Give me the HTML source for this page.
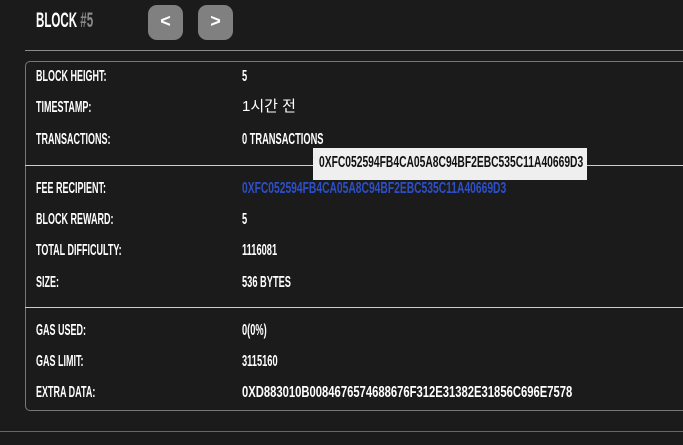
<!DOCTYPE html>
<html><head><meta charset="utf-8"><style>
body{margin:0;width:683px;height:445px;background:#1b1b1b;overflow:hidden;position:relative;font-family:"Liberation Sans","Noto Sans CJK KR",sans-serif;font-weight:bold;color:#fff}
.t{position:absolute;white-space:nowrap;font-size:16px;line-height:16px;transform:scaleX(0.5625);transform-origin:left center}
.l{left:36px}.v{left:242px;transform:scaleX(0.58)}
.line{position:absolute;height:1px;background:#8a8a8a}
.btn{position:absolute;top:5px;width:35px;height:35px;border-radius:9px;background:#808080;color:#fff;font-size:18px;text-align:center;line-height:33px}
</style></head><body>
<div class="t" style="left:36px;top:10px;font-size:21px;line-height:21px;transform:scaleX(0.55)">BLOCK <span style="color:#8a8a8a">#5</span></div>
<div class="btn" style="left:148px">&lt;</div>
<div class="btn" style="left:198px">&gt;</div>
<div class="line" style="left:25px;right:0;top:50px"></div>
<div style="position:absolute;left:25px;top:61px;width:700px;height:348px;border:1px solid #777;border-radius:5px"></div>
<div class="line" style="left:25px;right:0;top:165px;background:#ccc"></div>
<div class="line" style="left:25px;right:0;top:307px;background:#ccc"></div>
<div class="line" style="left:0;right:0;top:431px;background:#666"></div>

<div class="t l" style="top:69px">BLOCK HEIGHT:</div><div class="t v" style="top:69px">5</div>
<div class="t l" style="top:100px">TIMESTAMP:</div><div class="t v" style="top:99px;transform:none;font-weight:normal;font-size:15px">1시간 전</div>
<div class="t l" style="top:132px">TRANSACTIONS:</div><div class="t v" style="top:132px">0 TRANSACTIONS</div>
<div class="t l" style="top:181px">FEE RECIPIENT:</div><div class="t v" style="top:181px;color:#2d50c8;transform:scaleX(0.643)">0XFC052594FB4CA05A8C94BF2EBC535C11A40669D3</div>
<div class="t l" style="top:212px">BLOCK REWARD:</div><div class="t v" style="top:212px">5</div>
<div class="t l" style="top:243px">TOTAL DIFFICULTY:</div><div class="t v" style="top:243px">1116081</div>
<div class="t l" style="top:275px">SIZE:</div><div class="t v" style="top:275px">536 BYTES</div>
<div class="t l" style="top:323px">GAS USED:</div><div class="t v" style="top:323px">0(0%)</div>
<div class="t l" style="top:354px">GAS LIMIT:</div><div class="t v" style="top:354px">3115160</div>
<div class="t l" style="top:385px">EXTRA DATA:</div><div class="t v" style="top:385px;transform:scaleX(0.703)">0XD883010B0084676574688676F312E31382E31856C696E7578</div>

<div style="position:absolute;left:313px;top:148px;width:274px;height:32px;background:#efefef"></div>
<div class="t" style="left:319px;top:155px;color:#111;transform:scaleX(0.643)">0XFC052594FB4CA05A8C94BF2EBC535C11A40669D3</div>
</body></html>
